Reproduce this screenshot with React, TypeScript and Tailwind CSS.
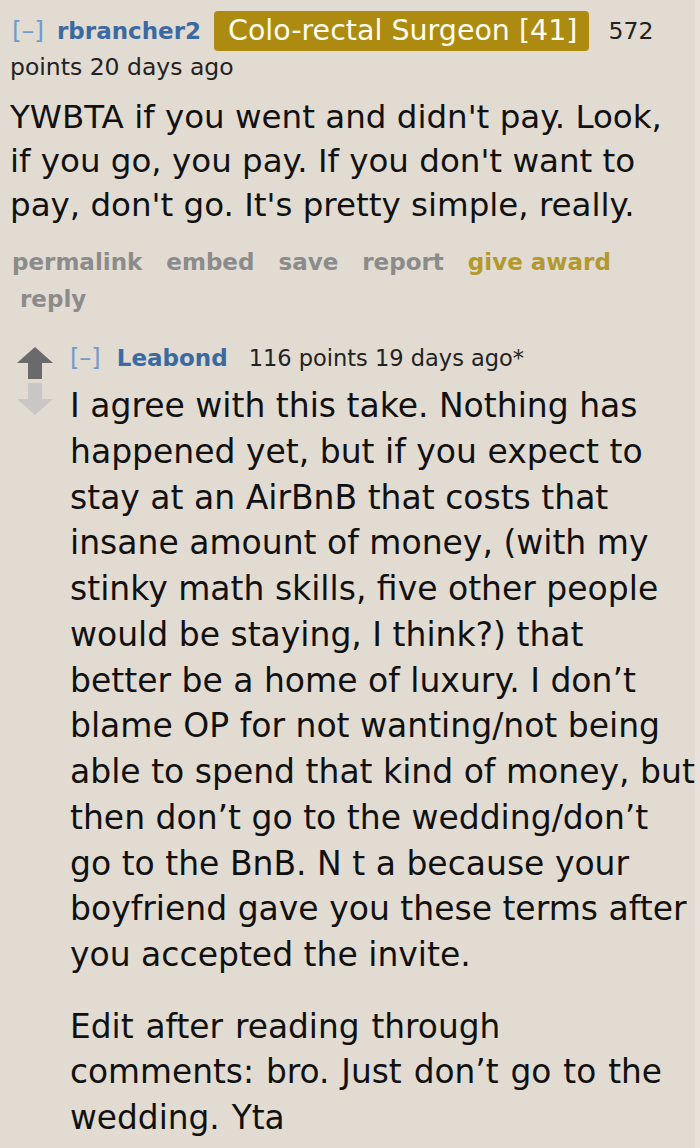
import React from "react";

const sans = { fontFamily: '"DejaVu Sans", Verdana, Tahoma, sans-serif' };

const firstBody = [
  "YWBTA if you went and didn't pay. Look,",
  "if you go, you pay. If you don't want to",
  "pay, don't go. It's pretty simple, really.",
];

const replyBody = [
  "I agree with this take. Nothing has",
  "happened yet, but if you expect to",
  "stay at an AirBnB that costs that",
  "insane amount of money, (with my",
  "stinky math skills, five other people",
  "would be staying, I think?) that",
  "better be a home of luxury. I don’t",
  "blame OP for not wanting/not being",
  "able to spend that kind of money, but",
  "then don’t go to the wedding/don’t",
  "go to the BnB. N t a because your",
  "boyfriend gave you these terms after",
  "you accepted the invite.",
];

const editBody = [
  "Edit after reading through",
  "comments: bro. Just don’t go to the",
  "wedding. Yta",
];

function Arrow({ up, color }: { up?: boolean; color: string }) {
  return (
    <svg width="36" height="32" viewBox="0 0 36 32" className={up ? "" : "rotate-180"}>
      <path d="M18 0 L36 16 L25 16 L25 32 L11 32 L11 16 L0 16 Z" fill={color} />
    </svg>
  );
}

function Lines({ lines }: { lines: string[] }) {
  return (
    <>
      {lines.map((l, i) => (
        <span key={i} className="block whitespace-nowrap">
          {l}
        </span>
      ))}
    </>
  );
}

export default function App() {
  return (
    <div className="flex min-h-[1148px] w-[700px] bg-[#e1dbd2]" style={sans}>
      <div className="w-[695px] pl-[10px]">
        {/* top comment */}
        <div className="flex flex-wrap items-center pt-[11px] text-[23.5px] text-[#222]">
          <span className="ml-[2px] text-[25px] leading-[40px] text-[#729bcc]">[–]</span>
          <span className="ml-[13px] text-[23px] font-bold leading-[40px] text-[#3a6aa1]">rbrancher2</span>
          <span className="ml-[13px] rounded-[4px] bg-[#ad8b10] pl-[14px] pr-[11px] text-[28.5px] leading-[40px] text-[#fffdf2]">
            Colo-rectal Surgeon [41]
          </span>
          <span className="ml-[20px] leading-[40px]">572</span>
          <span className="w-full leading-[32px]">points 20 days ago</span>
        </div>
        <p className="mt-[12px] text-[32.5px] leading-[44px] text-[#111]">
          <Lines lines={firstBody} />
        </p>
        <ul className="ml-[2px] mt-[17px] flex w-[640px] flex-wrap gap-x-[24px] text-[23px] font-bold leading-[37px] text-[#8b8b8b]">
          <li>permalink</li>
          <li>embed</li>
          <li>save</li>
          <li>report</li>
          <li className="text-[#b3982c]">give award</li>
          <li className="w-full pl-[8px]">reply</li>
        </ul>

        {/* reply */}
        <div className="mt-[21px] flex">
          <div className="flex w-[60px] flex-col items-start gap-[4px] pl-[7px] pt-[8px]">
            <Arrow up color="#6a6a6a" />
            <Arrow color="#c8c7c5" />
          </div>
          <div className="flex-1">
            <div className="flex items-center pt-[2px] text-[22.5px] leading-[34px] text-[#222]">
              <span className="text-[24px] text-[#729bcc]">[–]</span>
              <span className="ml-[16px] text-[23px] font-bold text-[#3a6aa1]">Leabond</span>
              <span className="ml-[21px]">116 points 19 days ago*</span>
            </div>
            <p className="mt-[8px] text-[33px] leading-[45.75px] text-[#111]">
              <Lines lines={replyBody} />
            </p>
            <p className="mt-[27px] text-[32.8px] leading-[45.5px] text-[#111] [word-spacing:1.5px]">
              <Lines lines={editBody} />
            </p>
          </div>
        </div>
      </div>
      <div className="w-[5px] bg-[#e7e3dc]" />
    </div>
  );
}
